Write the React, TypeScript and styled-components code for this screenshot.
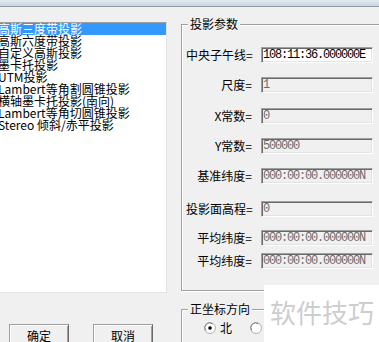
import React from "react";
import styled, { createGlobalStyle } from "styled-components";

const GlobalStyle = createGlobalStyle`
  html, body { margin: 0; padding: 0; background: #f0f0f0; }
  body { overflow: hidden; }
  * { box-sizing: border-box; }
`;

const CJK = `"Noto Sans CJK SC", "Noto Sans", sans-serif`;

const Page = styled.div`
  position: relative;
  width: 379px;
  height: 342px;
  overflow: hidden;
  background: #f0f0f0;
  font-family: ${CJK};
  font-size: 12px;
  color: #000;
`;

const TitleStrip = styled.div`
  height: 7px;
  background: linear-gradient(#e1e9f1, #cbd6e2);
  border-bottom: 1px solid #8e99a5;
`;

const Main = styled.div`
  display: flex;
  align-items: flex-start;
`;

const LeftCol = styled.div`
  width: 181px;
  flex-shrink: 0;
  display: flex;
  flex-direction: column;
`;

const ListBox = styled.ul`
  list-style: none;
  margin: 15px 0 0 -4px;
  padding: 0;
  width: 171px;
  height: 271px;
  background: #fff;
  border-top: 1px solid #a0a0a0;
  border-left: 1px solid #a0a0a0;
  border-right: 1px solid #e3e3e3;
  border-bottom: 1px solid #e3e3e3;
  box-shadow: inset 1px 1px 0 #696969;
  overflow: hidden;
`;

const ListItem = styled.li<{ $selected?: boolean }>`
  height: 12px;
  line-height: 12px;
  padding-left: 1px;
  white-space: nowrap;
  font-size: 12px;
  background: ${(p) => (p.$selected ? "#3399ff" : "transparent")};
  color: ${(p) => (p.$selected ? "#fff" : "#000")};
`;

const ButtonRow = styled.div`
  display: flex;
  gap: 24px;
  margin: 31px 0 0 9px;
`;

const Button = styled.button`
  width: 60px;
  height: 23px;
  padding: 0;
  font-family: ${CJK};
  font-size: 12px;
  line-height: 16px;
  color: #000;
  background: #f0f0f0;
  border-top: 1px solid #a0a0a0;
  border-left: 1px solid #a0a0a0;
  border-right: 1px solid #696969;
  border-bottom: 1px solid #696969;
  box-shadow: inset 1px 1px 0 #ffffff, inset -1px -1px 0 #a0a0a0;
`;

const RightCol = styled.div`
  display: flex;
  flex-direction: column;
`;

const GroupBox = styled.div<{ $top: number; $height: number }>`
  position: relative;
  width: 220px;
  height: ${(p) => p.$height}px;
  margin-top: ${(p) => p.$top}px;
  border: 1px solid #a0a0a0;
  box-shadow: inset 1px 1px 0 #fff, 1px 1px 0 #fff;
`;

const Legend = styled.span`
  position: absolute;
  top: -7px;
  left: 6px;
  padding: 0 2px;
  height: 12px;
  line-height: 12px;
  font-size: 12px;
  background: #f0f0f0;
  white-space: nowrap;
`;

const Rows = styled.div`
  display: flex;
  flex-direction: column;
  padding: 22px 0 0 4px;
`;

const Row = styled.div<{ $gap: number }>`
  display: flex;
  align-items: center;
  gap: 9px;
  height: 16px;
  margin-top: ${(p) => p.$gap}px;
`;

const Label = styled.span`
  width: 66px;
  text-align: right;
  white-space: nowrap;
  font-size: 12px;
  line-height: 12px;
  direction: rtl;
  unicode-bidi: plaintext;
`;

const Field = styled.input`
  width: 112px;
  height: 16px;
  margin: 0;
  padding: 0 0 0 1px;
  font-family: "Liberation Mono", monospace;
  font-size: 12px;
  letter-spacing: -1.2px;
  color: #000;
  background: #fff;
  border-top: 1px solid #a0a0a0;
  border-left: 1px solid #a0a0a0;
  border-right: 1px solid #fff;
  border-bottom: 1px solid #fff;
  box-shadow: inset 1px 1px 0 #696969, inset -1px -1px 0 #e3e3e3;
  outline: none;
  &:disabled {
    background: #f0f0f0;
    color: #6d6d6d;
  }
`;

const RadioRow = styled.div`
  display: flex;
  align-items: center;
  padding: 12px 0 0 22px;
  height: 24px;
`;

const RadioOption = styled.label<{ $gapAfter?: number }>`
  display: flex;
  align-items: center;
  gap: 4px;
  margin-right: ${(p) => p.$gapAfter ?? 0}px;
  font-size: 12px;
  line-height: 12px;
`;

const Watermark = styled.div`
  position: absolute;
  left: 264px;
  top: 285px;
  right: 0;
  bottom: 0;
  background: #fff;
  padding: 14px 0 0 6px;
  font-family: ${CJK};
  font-size: 26px;
  line-height: 26px;
  color: #cdcdcd;
  white-space: nowrap;
`;

const Radio = ({ checked }: { checked?: boolean }) => (
  <svg width="12" height="12" viewBox="0 0 12 12">
    <circle cx="6" cy="6" r="5.5" fill="#fff" stroke="#b0b0b0" />
    <path d="M1.8 8.5 A4.8 4.8 0 0 1 8.5 1.8" fill="none" stroke="#808080" />
    {checked && <circle cx="6" cy="6" r="1.8" fill="#000" />}
  </svg>
);

const items = [
  "高斯三度带投影",
  "高斯六度带投影",
  "自定义高斯投影",
  "墨卡托投影",
  "UTM投影",
  "Lambert等角割圆锥投影",
  "横轴墨卡托投影(南向)",
  "Lambert等角切圆锥投影",
  "Stereo 倾斜/赤平投影",
];

const params: { label: string; value: string; enabled?: boolean; gap: number }[] = [
  { label: "中央子午线=", value: "108:11:36.000000E", enabled: true, gap: 0 },
  { label: "尺度=", value: "1", gap: 14 },
  { label: "X常数=", value: "0", gap: 15 },
  { label: "Y常数=", value: "500000", gap: 14 },
  { label: "基准纬度=", value: "000:00:00.000000N", gap: 14 },
  { label: "投影面高程=", value: "0", gap: 17 },
  { label: "平均纬度=", value: "000:00:00.000000N", gap: 13 },
  { label: "平均纬度=", value: "000:00:00.000000N", gap: 7 },
];

export default function App() {
  return (
    <Page>
      <GlobalStyle />
      <TitleStrip />
      <Main>
        <LeftCol>
          <ListBox>
            {items.map((it, i) => (
              <ListItem key={i} $selected={i === 0}>
                {it}
              </ListItem>
            ))}
          </ListBox>
          <ButtonRow>
            <Button>确定</Button>
            <Button>取消</Button>
          </ButtonRow>
        </LeftCol>
        <RightCol>
          <GroupBox $top={17} $height={267}>
            <Legend>投影参数</Legend>
            <Rows>
              {params.map((p, i) => (
                <Row key={i} $gap={p.gap}>
                  <Label>{p.label}</Label>
                  <Field readOnly disabled={!p.enabled} value={p.value} />
                </Row>
              ))}
            </Rows>
          </GroupBox>
          <GroupBox $top={18} $height={60}>
            <Legend>正坐标方向</Legend>
            <RadioRow>
              <RadioOption $gapAfter={18}>
                <Radio checked />
                北
              </RadioOption>
              <RadioOption>
                <Radio />
                南
              </RadioOption>
            </RadioRow>
          </GroupBox>
        </RightCol>
      </Main>
      <Watermark>软件技巧</Watermark>
    </Page>
  );
}
